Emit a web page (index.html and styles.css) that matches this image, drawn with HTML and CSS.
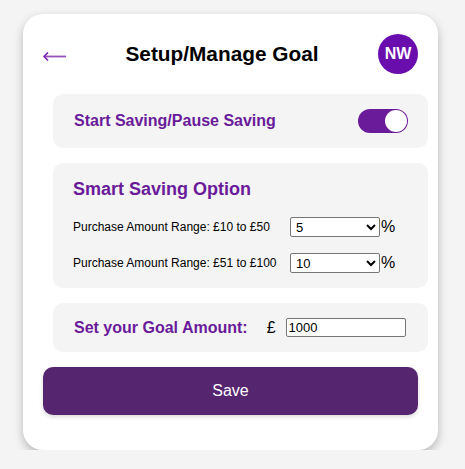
FILE: index.html
```html
<!DOCTYPE html>
<html lang="en">
<head>
<meta charset="utf-8">
<title>Setup/Manage Goal</title>
<link rel="stylesheet" href="styles.css">
</head>
<body>
<div class="card">
  <div class="header">
    <span class="back">
      <svg width="23" height="14" viewBox="0 0 23 14"><path d="M1 7.5 H23" stroke="#9552bd" stroke-width="1.8" fill="none"/><path d="M5 3.5 L1 7.5 L5 11.5" stroke="#7a1fb5" stroke-width="1.6" fill="none" stroke-linejoin="round"/></svg>
    </span>
    <h1 class="title">Setup/Manage Goal</h1>
    <div class="avatar">NW</div>
  </div>

  <div class="section toggle-row">
    <span class="label">Start Saving/Pause Saving</span>
    <span class="switch"><span class="knob"></span></span>
  </div>

  <div class="section smart">
    <h2 class="smart-title">Smart Saving Option</h2>
    <div class="range-row">
      <span class="range-label">Purchase Amount Range: £10 to £50</span>
      <select class="pct"><option>5</option></select><span class="pct-sign">%</span>
    </div>
    <div class="range-row">
      <span class="range-label">Purchase Amount Range: £51 to £100</span>
      <select class="pct"><option>10</option></select><span class="pct-sign">%</span>
    </div>
  </div>

  <div class="section goal-row">
    <span class="label">Set your Goal Amount:</span>
    <span class="pound">£</span>
    <input class="amount" type="text" value="1000">
  </div>

  <button class="save">Save</button>
</div>
</body>
</html>
```

FILE: styles.css
```css
* { box-sizing: border-box; }
html, body { margin: 0; padding: 0; }
body {
  background: #f4f4f4;
  font-family: "Liberation Sans", Arial, sans-serif;
  padding: 14px 0 0 23px;
}
.card {
  width: 415px;
  height: 436px;
  background: #fff;
  border-radius: 20px;
  box-shadow: 0 4px 10px rgba(0,0,0,0.25);
  padding: 20px;
}
.header {
  display: flex;
  align-items: center;
  justify-content: space-between;
  height: 40px;
  margin-bottom: 20px;
}
.back {
  width: 23px;
  height: 14px;
  display: flex;
  margin-top: 3px;
}
.title {
  margin: 0;
  font-size: 20.8px;
  font-weight: bold;
  color: #000;
}
.avatar {
  width: 40px;
  height: 40px;
  border-radius: 50%;
  background: #6a0dad;
  color: #fff;
  font-weight: bold;
  font-size: 16px;
  display: flex;
  align-items: center;
  justify-content: center;
}
.section {
  background: #f4f4f4;
  border-radius: 10px;
  margin-left: 10px;
  width: 375px;
  margin-bottom: 15px;
}
.label {
  color: #6a1b9a;
  font-weight: bold;
  font-size: 16px;
  white-space: nowrap;
  flex-shrink: 0;
}
.toggle-row {
  display: flex;
  align-items: center;
  justify-content: space-between;
  padding: 15px 20px 15px 21px;
}
.switch {
  width: 50px;
  height: 24px;
  border-radius: 12px;
  background: #6a1b9a;
  display: flex;
  justify-content: flex-end;
  align-items: center;
  padding: 0 1px;
}
.knob {
  width: 22px;
  height: 22px;
  border-radius: 50%;
  background: #fff;
}
.smart {
  padding: 15px 20px;
}
.smart-title {
  margin: 0 0 17px;
  font-size: 18px;
  line-height: 22px;
  color: #6a1b9a;
}
.range-row {
  display: flex;
  align-items: center;
  height: 20px;
  margin-bottom: 16px;
}
.range-row:last-child { margin-bottom: 0; }
.range-label {
  width: 217px;
  font-size: 12px;
  color: #000;
}
.pct {
  width: 90px;
  height: 20px;
  font-size: 13px;
  font-family: "Liberation Sans", Arial, sans-serif;
  border: 1px solid #767676;
  border-radius: 2px;
  background: #fff;
  padding: 0 1px;
}
.pct-sign {
  font-size: 16px;
  margin-left: 1px;
}
.goal-row {
  display: flex;
  align-items: center;
  padding: 15px 21px;
}
.pound {
  font-size: 16px;
  margin-left: 19px;
}
.amount {
  margin-left: 10px;
  width: 120px;
  height: 19px;
  font-size: 13px;
  font-family: "Liberation Sans", Arial, sans-serif;
  border: 1px solid #767676;
  border-radius: 2px;
  padding: 0 2px;
}
.save {
  display: block;
  width: 375px;
  height: 48px;
  border: none;
  border-radius: 10px;
  background: #56256f;
  color: #fff;
  font-size: 16px;
  font-family: "Liberation Sans", Arial, sans-serif;
  box-shadow: 0 2px 4px rgba(0,0,0,0.15);
}
```
